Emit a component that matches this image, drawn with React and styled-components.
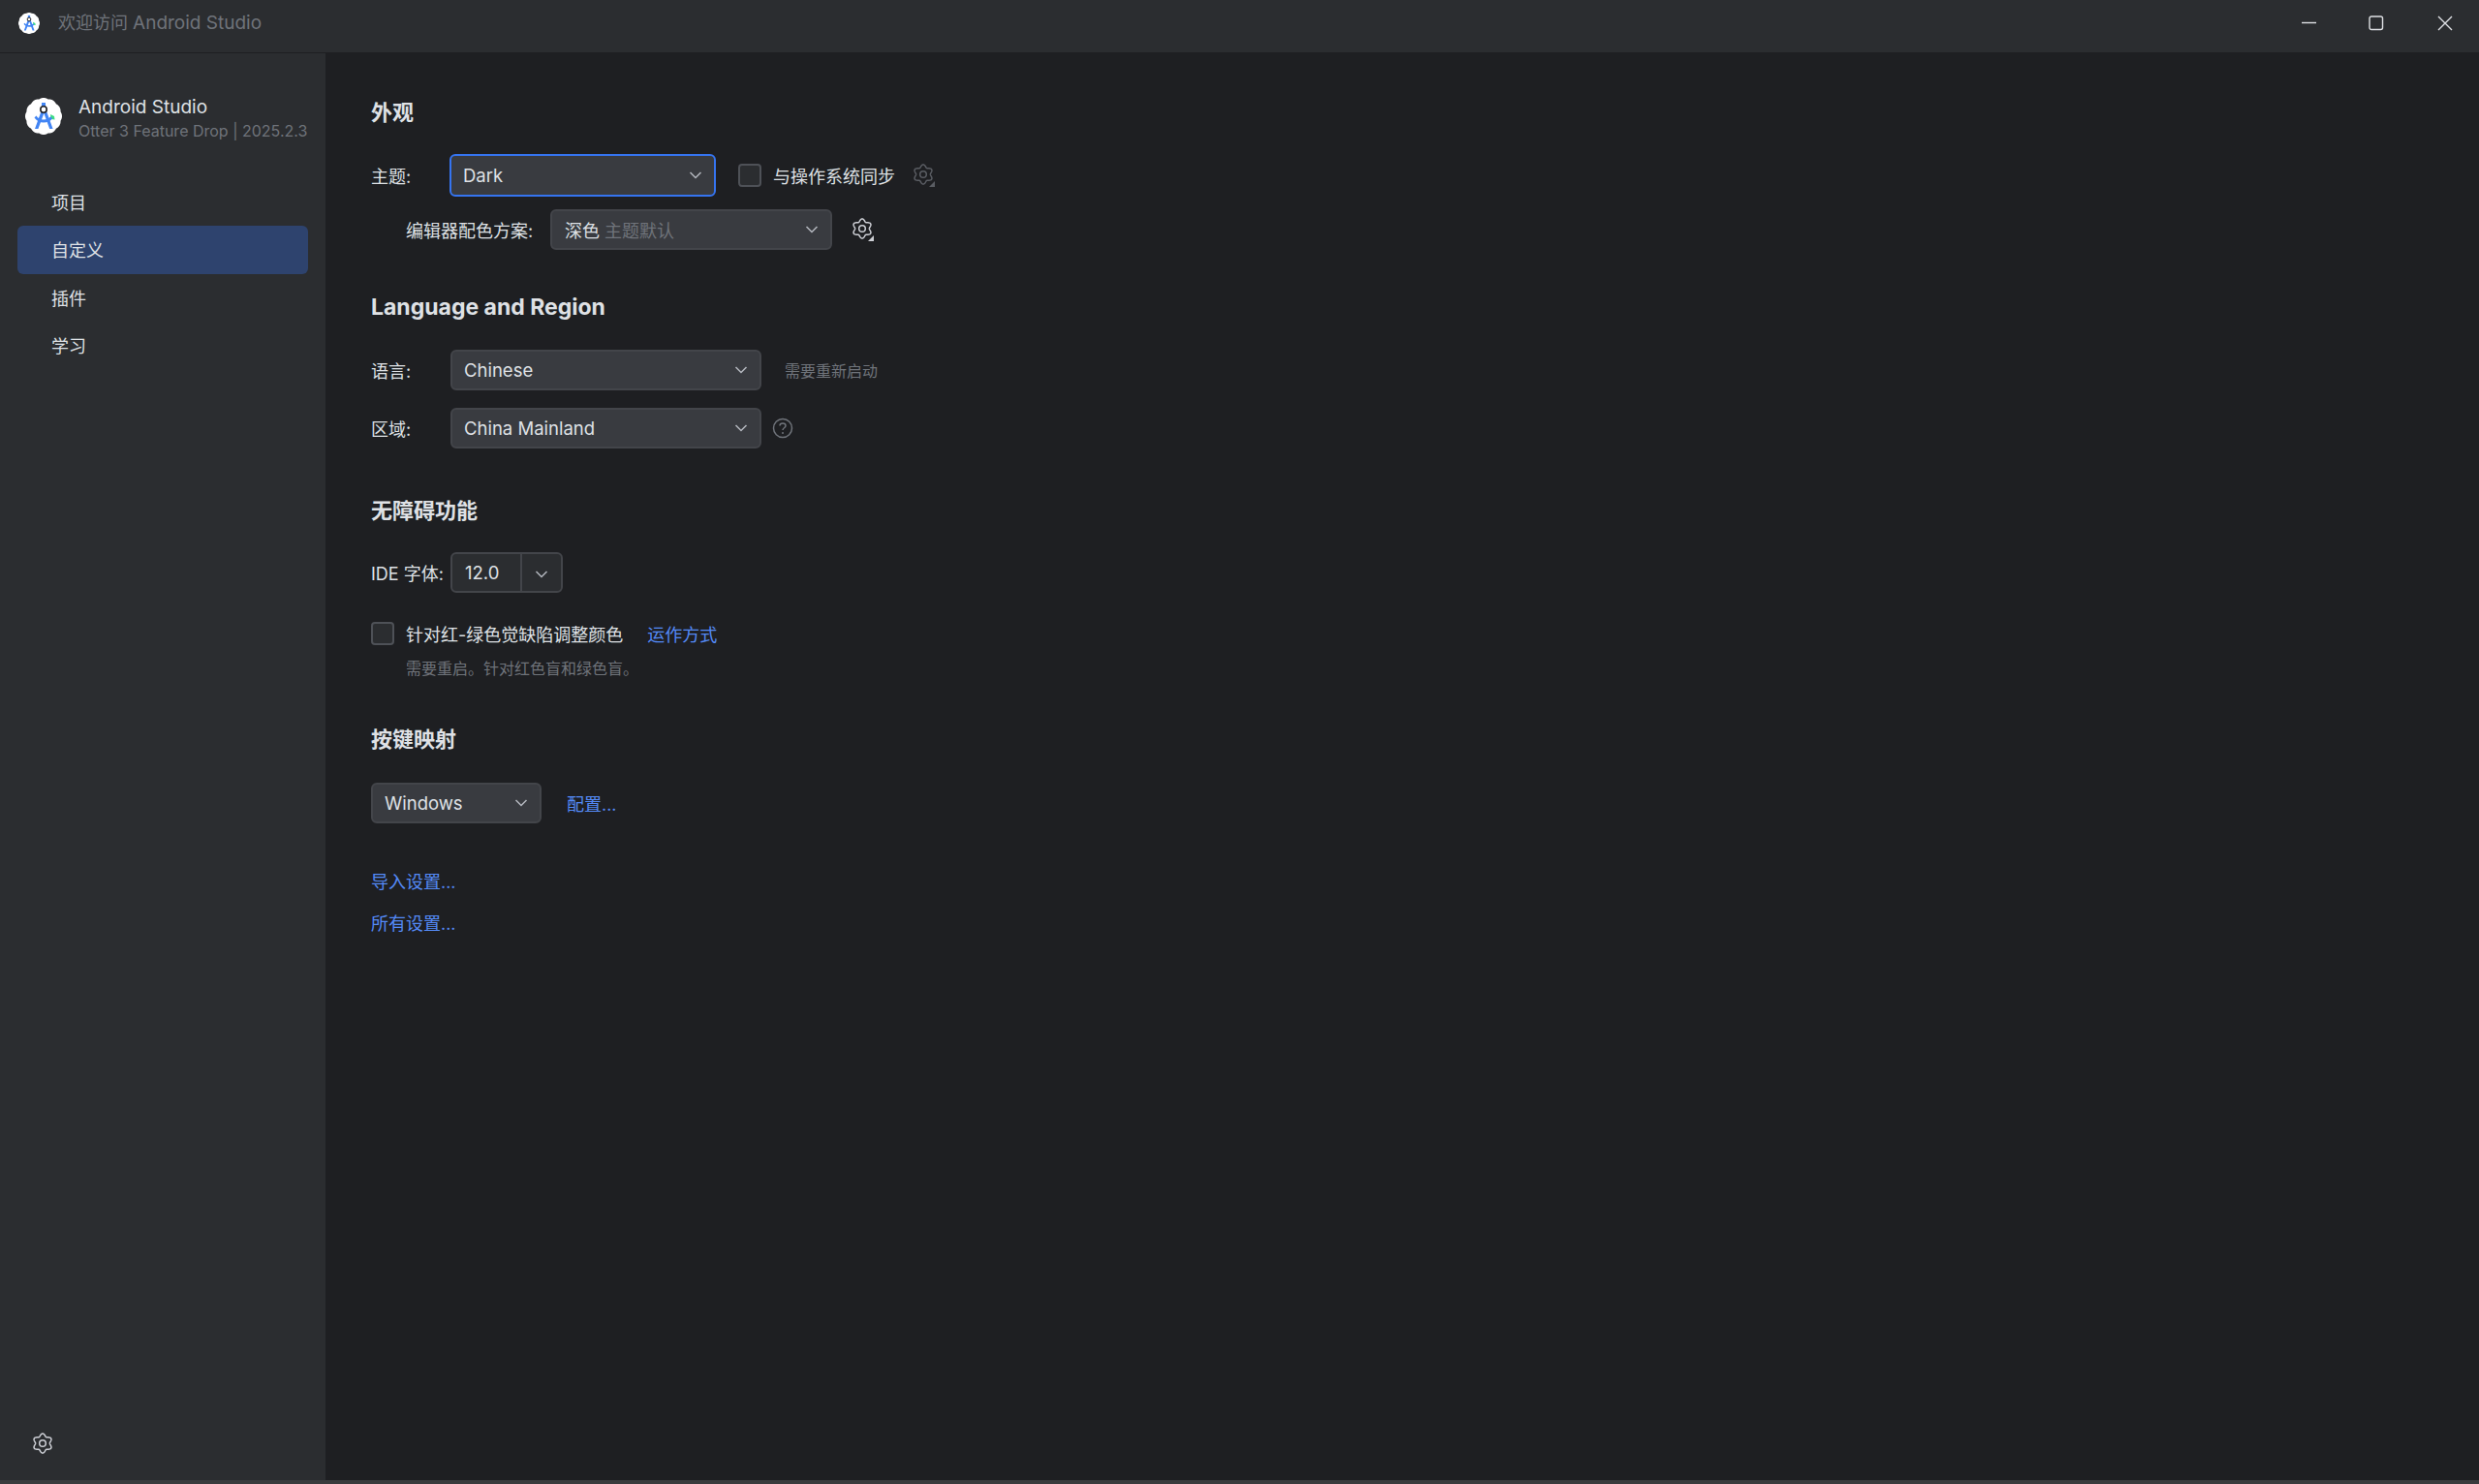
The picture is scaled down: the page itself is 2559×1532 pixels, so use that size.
import React from "react";
import styled, { createGlobalStyle } from "styled-components";

const Global = createGlobalStyle`
  html, body { margin: 0; padding: 0; background: #1e1f22; }
  body { font-family: Inter, "Noto Sans CJK SC", sans-serif; font-size: 18px; color: #dfe1e5; }
`;

const Window = styled.div`
  width: 2559px; height: 1532px; display: flex; flex-direction: column; overflow: hidden; background: #1e1f22;
`;
const TitleBar = styled.header`
  flex: none; display: flex; align-items: center; background: #2b2d30; padding-left: 19px; padding-bottom: 7px; box-sizing: border-box; height: 55px;
  border-bottom: 1px solid #1e1f22;
`;
const TitleText = styled.span`
  margin-left: 19px; color: #6f737a; font-size: 18px; flex: 1; line-height: 22px;
`;
const TitleLatin = styled.span`
  font-size: 19px;
`;
const WinControls = styled.div`
  display: flex; align-items: center;
`;
const WinButton = styled.button`
  width: 71px; height: 30px; padding: 0; border: 0; background: none; display: flex; align-items: center; justify-content: center; color: #dfe1e5;
`;
const Body = styled.div`
  flex: 1; display: flex; min-height: 0;
`;
const Sidebar = styled.aside`
  width: 336px; flex: none; background: #2b2d30; display: flex; flex-direction: column; padding: 0 18px; box-sizing: border-box;
`;
const Brand = styled.div`
  display: flex; gap: 17px; padding: 38px 0 0 8px; height: 98px; box-sizing: border-box; align-items: flex-start;
`;
const BrandLogo = styled.div`
  margin-top: 8px; width: 38px; height: 38px; flex: none; display: flex;
`;
const BrandText = styled.div`
  display: flex; flex-direction: column; padding-top: 6px;
`;
const BrandName = styled.div`
  font-size: 19px; line-height: 24px; color: #dfe1e5; white-space: nowrap;
`;
const BrandVersion = styled.div`
  font-size: 16px; line-height: 22px; margin-top: 1px; color: #6f737a; white-space: nowrap;
`;
const Nav = styled.nav`
  display: flex; flex-direction: column; margin-top: 31px;
`;
const NavItem = styled.div`
  height: ${p => (p.$active ? 50 : 49)}px; box-sizing: border-box; padding: 0 0 2px 35px; display: flex; align-items: center; border-radius: 6px;
  background: ${p => (p.$active ? "#2e436e" : "transparent")}; color: #dfe1e5; font-size: 18px;
`;
const SidebarFoot = styled.div`
  margin-top: auto; padding: 0 0 24px 15px; display: flex; color: #ced0d6;
`;
const Content = styled.main`
  flex: 1; padding: 47px 0 0 47px; display: flex; flex-direction: column; align-items: flex-start; box-sizing: border-box;
`;
const BottomEdge = styled.div`
  height: 4px; flex: none; background: #3a3b3d;
`;
const SectionTitle = styled.h2`
  margin: ${p => p.$top || 0}px 0 0; height: 28px; font-size: ${p => (p.$latin ? 23 : 22)}px; line-height: 28px; font-weight: 700; color: #dfe1e5;
`;
const Row = styled.div`
  display: flex; align-items: center; margin-top: ${p => p.$top || 0}px; padding-left: ${p => p.$indent || 0}px; min-height: ${p => p.$h || 42}px;
`;
const Label = styled.span`
  width: ${p => p.$w}px; flex: none; white-space: nowrap; font-size: 18px; padding-bottom: 1px;
`;
const Select = styled.div`
  width: ${p => p.$w}px; height: ${p => p.$h || 42}px; box-sizing: border-box; display: flex; align-items: center; justify-content: space-between;
  padding: 0 12px; background: #393b40; border: ${p => (p.$focus ? "2px solid #3574f0" : "2px solid #43454a")}; border-radius: 6px;
  color: #dfe1e5; font-size: 18.5px; margin-right: ${p => p.$mr || 0}px;
`;
const SelectCjk = styled.span`
  font-size: 18px; padding-left: 1px;
`;
const Muted = styled.span`
  color: #6f737a; margin-left: 5px;
`;
const Spinner = styled.div`
  width: 116px; height: 42px; box-sizing: border-box; display: flex; background: #2b2d30; border: 2px solid #43454a; border-radius: 6px;
`;
const SpinnerValue = styled.span`
  width: 72px; box-sizing: border-box; padding-left: 13px; border-right: 2px solid #43454a; display: flex; align-items: center; font-size: 18.5px;
`;
const SpinnerArrow = styled.span`
  flex: 1; display: flex; align-items: center; justify-content: center; padding-top: 3px;
`;
const Checkbox = styled.span`
  width: 24px; height: 24px; flex: none; box-sizing: border-box; border: 2px solid #4e5157; border-radius: 4px; background: #2b2d30; margin-right: 12px;
`;
const Hint = styled.span`
  font-size: 16px; color: #6f737a; white-space: nowrap;
`;
const LinkText = styled.a`
  color: #548af7; font-size: 18px; margin-left: ${p => p.$ml || 0}px; white-space: nowrap;
`;
const IconSlot = styled.span`
  display: flex; margin-left: ${p => p.$ml || 0}px; color: ${p => p.$color || "#ced0d6"};
`;

const gearPath = (() => {
  const pts = [];
  for (let i = 0; i < 96; i++) {
    const t = (i / 96) * Math.PI * 2;
    const r = 8.7 + 1.35 * Math.cos(6 * t);
    pts.push(`${(11 + r * Math.sin(t)).toFixed(2)} ${(11 - r * Math.cos(t)).toFixed(2)}`);
  }
  return "M" + pts.join("L") + "Z";
})();

const Gear = ({ mark, size = 22 }) => (
  <svg width={size + 2} height={size + 4} viewBox="0 0 24 26" fill="none">
    <path d={gearPath} stroke="currentColor" strokeWidth="1.5" strokeLinejoin="round" transform="translate(0 1)" />
    <circle cx="11" cy="12" r="3.3" stroke="currentColor" strokeWidth="1.5" />
    {mark && <path d="M23 19v6h-6z" fill="currentColor" />}
  </svg>
);

const Chevron = () => (
  <svg width="14" height="10" viewBox="0 0 14 10" fill="none">
    <path d="M1.5 2 7 7.5 12.5 2" stroke="#b4b8bf" strokeWidth="1.5" />
  </svg>
);

const scallop = (() => {
  const pts = [];
  for (let i = 0; i < 120; i++) {
    const t = (i / 120) * Math.PI * 2;
    const r = 18.2 + 0.8 * Math.abs(Math.cos(6 * t));
    pts.push(`${(19 + r * Math.cos(t)).toFixed(2)} ${(19 + r * Math.sin(t)).toFixed(2)}`);
  }
  return "M" + pts.join("L") + "Z";
})();

const Logo = ({ size }) => (
  <svg width={size} height={size} viewBox="0 0 38 38">
    <path d={scallop} fill="#fff" />
    <path d="M26 17l4 2 .5 3.5-4-.5z" fill="#3ddc84" />
    <path d="M17.600 11 10 32h3.400l6-16 5.800 16h3.400L21 11z" fill="#4285f4" />
    <path d="M9.500 20.500c2 3 5.500 5 9.500 5s7-1.600 9-4l-1.600-2.200c-1.700 2-4.400 3.200-7.400 3.200s-6-1.500-7.600-4z" fill="#4285f4" />
    <path d="M17 5h4v5h-4z" fill="#4285f4" />
    <circle cx="19" cy="12" r="3.2" fill="#fff" stroke="#202124" strokeWidth="1.6" />
  </svg>
);

export default function App() {
  return (
    <Window>
      <Global />
      <TitleBar>
        <Logo size={22} />
        <TitleText>欢迎访问 <TitleLatin>Android Studio</TitleLatin></TitleText>
        <WinControls>
          <WinButton aria-label="minimize">
            <svg width="18" height="3" viewBox="0 0 18 3"><path d="M3 1.500h15" stroke="#dfe1e5" strokeWidth="1.400" /></svg>
          </WinButton>
          <WinButton aria-label="maximize">
            <svg width="16" height="16" viewBox="0 0 16 16" fill="none"><rect x="1" y="1" width="13.500" height="13.500" rx="2" stroke="#dfe1e5" strokeWidth="1.400" /></svg>
          </WinButton>
          <WinButton aria-label="close">
            <svg width="16" height="16" viewBox="0 0 16 16" fill="none"><path d="M1 1l14 14M15 1 1 15" stroke="#dfe1e5" strokeWidth="1.400" /></svg>
          </WinButton>
        </WinControls>
      </TitleBar>
      <Body>
        <Sidebar>
          <Brand>
            <BrandLogo><Logo size={38} /></BrandLogo>
            <BrandText>
              <BrandName>Android Studio</BrandName>
              <BrandVersion>Otter 3 Feature Drop | 2025.2.3</BrandVersion>
            </BrandText>
          </Brand>
          <Nav>
            <NavItem>项目</NavItem>
            <NavItem $active>自定义</NavItem>
            <NavItem>插件</NavItem>
            <NavItem>学习</NavItem>
          </Nav>
          <SidebarFoot>
            <IconSlot><Gear /></IconSlot>
          </SidebarFoot>
        </Sidebar>
        <Content>
          <SectionTitle>外观</SectionTitle>
          <Row $top={29} $h={44}>
            <Label $w={81}>主题:</Label>
            <Select $w={275} $h={44} $focus $mr={23}>Dark<Chevron /></Select>
            <Checkbox />
            <span>与操作系统同步</span>
            <IconSlot $ml={18} $color="#5a5d63"><Gear mark /></IconSlot>
          </Row>
          <Row $top={13} $indent={36}>
            <Label $w={149}>编辑器配色方案:</Label>
            <Select $w={291}><SelectCjk>深色<Muted>主题默认</Muted></SelectCjk><Chevron /></Select>
            <IconSlot $ml={20}><Gear mark /></IconSlot>
          </Row>
          <SectionTitle $top={45} $latin>Language and Region</SectionTitle>
          <Row $top={30}>
            <Label $w={82}>语言:</Label>
            <Select $w={321} $mr={24}>Chinese<Chevron /></Select>
            <Hint>需要重新启动</Hint>
          </Row>
          <Row $top={18}>
            <Label $w={82}>区域:</Label>
            <Select $w={321}>China Mainland<Chevron /></Select>
            <IconSlot $ml={11} $color="#6f737a">
              <svg width="22" height="22" viewBox="0 0 22 22" fill="none">
                <circle cx="11" cy="11" r="9.500" stroke="currentColor" strokeWidth="1.500" />
                <path d="M8 8.500C8 6.800 9.300 6 11 6s3 1 3 2.500c0 2.300-3 2.200-3 4.500" stroke="currentColor" strokeWidth="1.500" />
                <circle cx="11" cy="16" r="1" fill="currentColor" />
              </svg>
            </IconSlot>
          </Row>
          <SectionTitle $top={50}>无障碍功能</SectionTitle>
          <Row $top={29}>
            <Label $w={82}>IDE 字体:</Label>
            <Spinner>
              <SpinnerValue>12.0</SpinnerValue>
              <SpinnerArrow><Chevron /></SpinnerArrow>
            </Spinner>
          </Row>
          <Row $top={29} $h={24}>
            <Checkbox />
            <span>针对红-绿色觉缺陷调整颜色</span>
            <LinkText $ml={25}>运作方式</LinkText>
          </Row>
          <Row $top={10} $h={24} $indent={36}>
            <Hint>需要重启。针对红色盲和绿色盲。</Hint>
          </Row>
          <SectionTitle $top={48}>按键映射</SectionTitle>
          <Row $top={31}>
            <Select $w={176} $mr={26}>Windows<Chevron /></Select>
            <LinkText>配置...</LinkText>
          </Row>
          <Row $top={46} $h={24}><LinkText>导入设置...</LinkText></Row>
          <Row $top={17} $h={24}><LinkText>所有设置...</LinkText></Row>
        </Content>
      </Body>
      <BottomEdge />
    </Window>
  );
}
